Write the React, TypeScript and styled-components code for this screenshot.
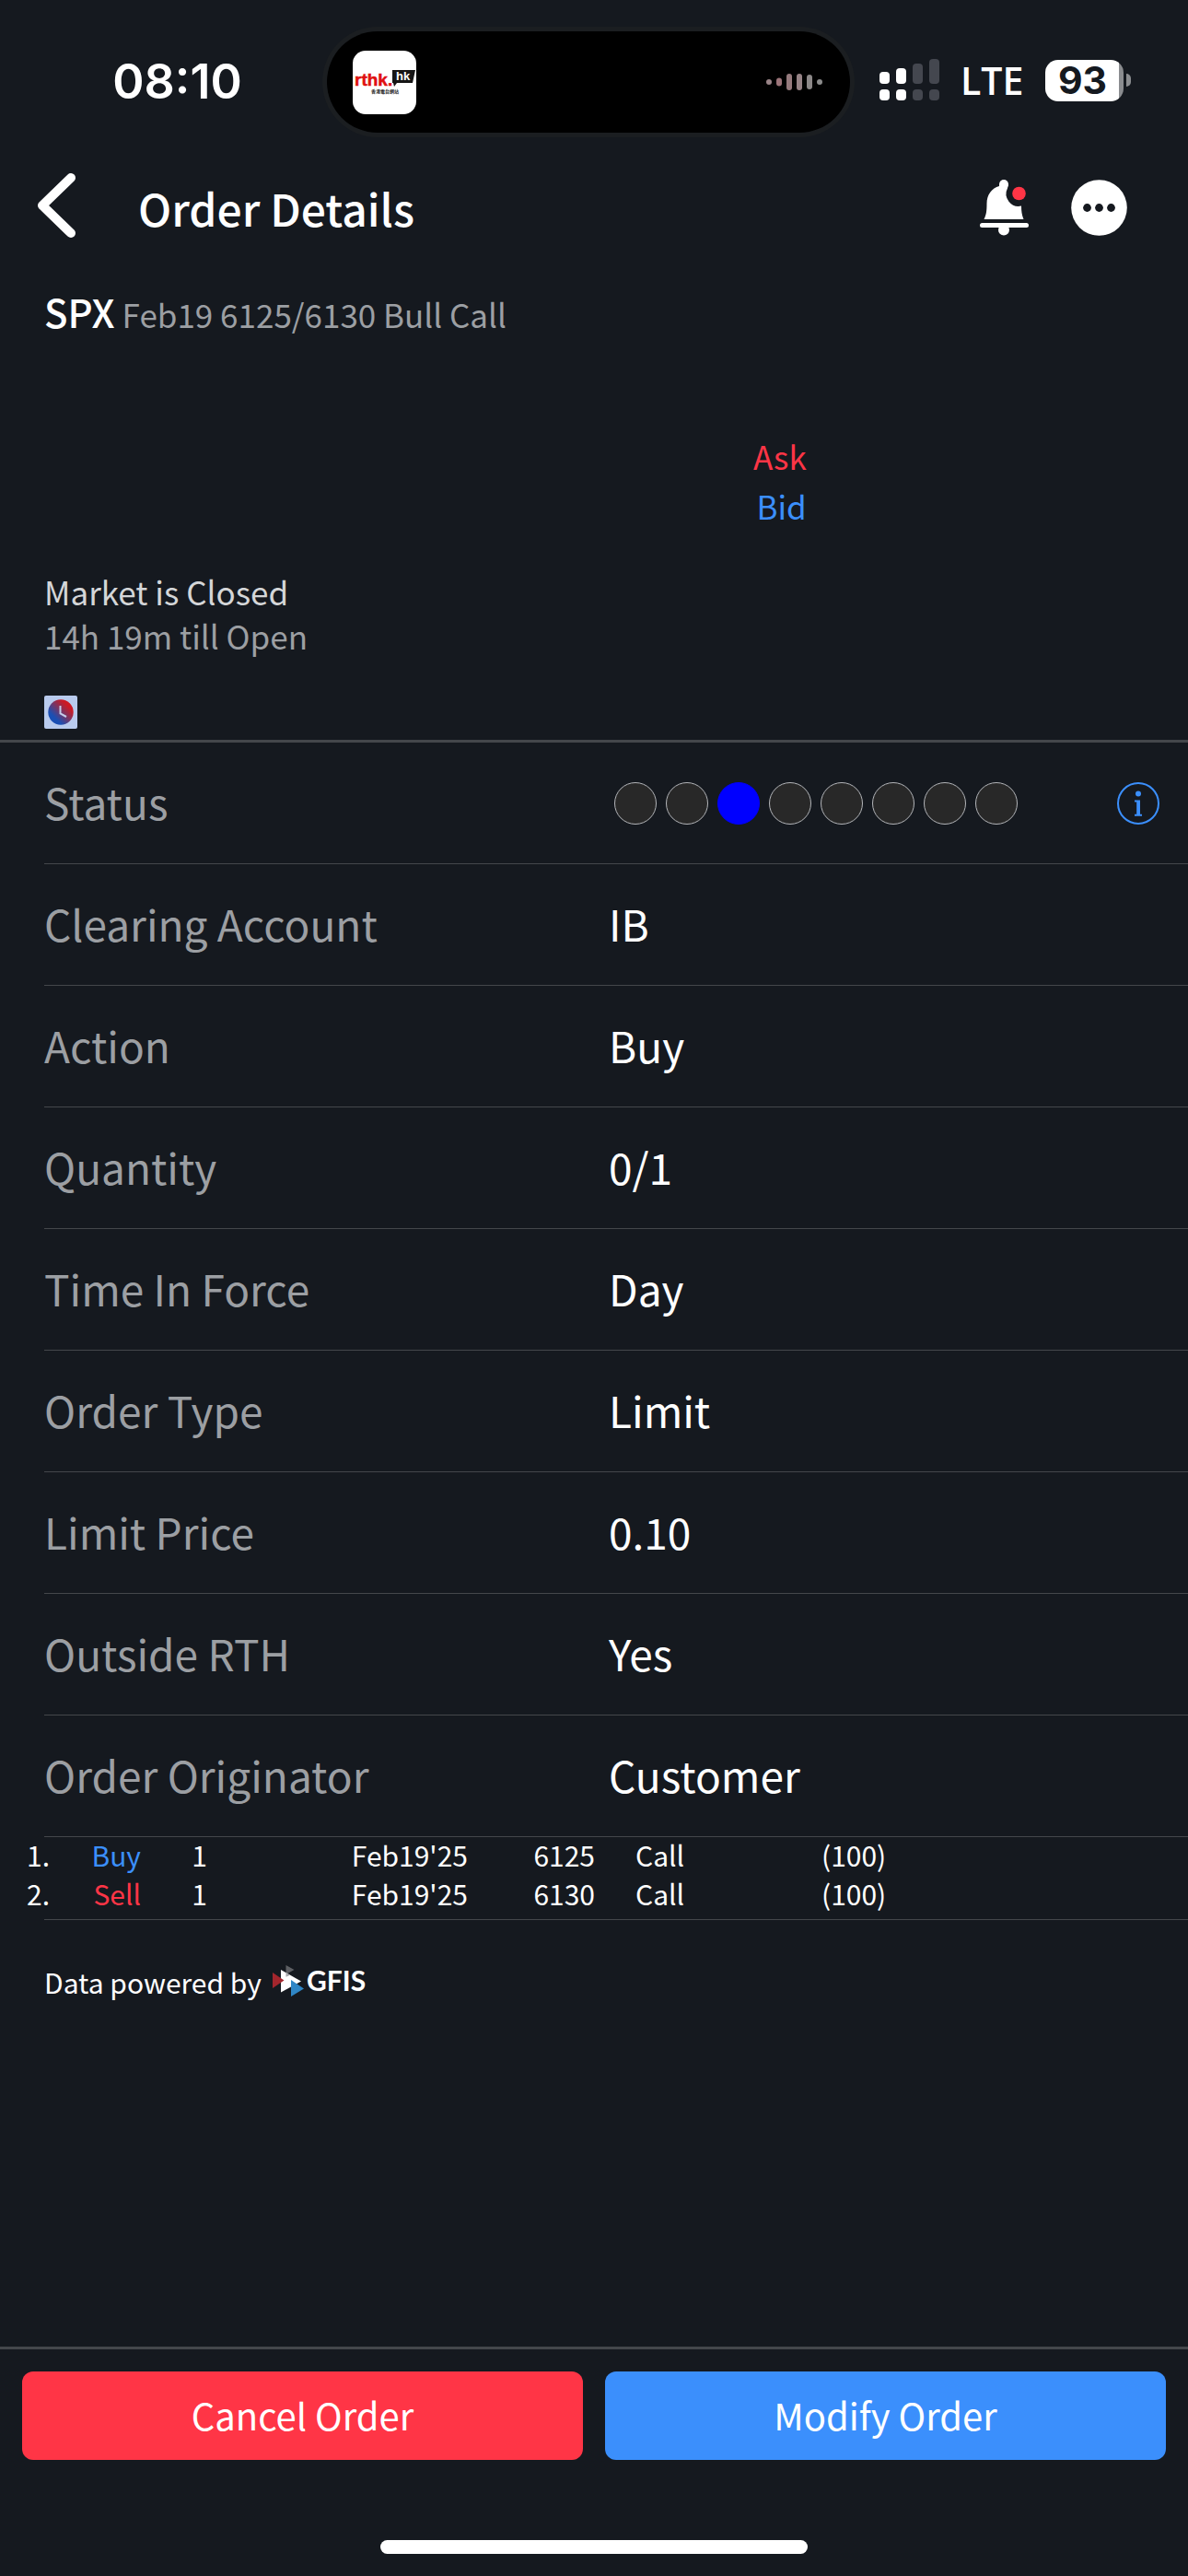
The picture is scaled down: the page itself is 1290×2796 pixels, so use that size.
import React from 'react';
import styled, { createGlobalStyle } from 'styled-components';

const color = {
  bg: '#15191f',
  line: '#44474b',
  label: '#9c9fa3',
  text: '#ffffff',
  soft: '#d4d6d8',
  red: '#ff3546',
  blue: '#3b8ffc',
};

const GlobalStyle = createGlobalStyle`
  * { box-sizing: border-box; }
  body {
    margin: 0;
    background: ${color.bg};
    color: ${color.text};
    font-family: "Noto Sans CJK SC", "Noto Sans", sans-serif;
  }
  button { font: inherit; color: inherit; border: 0; padding: 0; background: none; cursor: pointer; }
  svg { display: block; }
`;

const Page = styled.div`
  min-height: 100vh;
  display: flex;
  flex-direction: column;
`;

const StatusBar = styled.div`
  display: grid;
  grid-template-columns: 355fr 568fr 367fr;
  align-items: center;
  padding-top: 34px;
  font-family: Inter, "Liberation Sans", sans-serif;
`;

const Clock = styled.time`
  padding-left: 30px;
  text-align: center;
  font-size: 52px;
  line-height: 60px;
  font-weight: 600;
`;

const Island = styled.div`
  display: flex;
  align-items: center;
  justify-content: space-between;
  height: 110px;
  padding: 0 28px;
  border-radius: 55px;
  background: #000;
  box-shadow: 0 0 0 5px #1b1e21;
`;

const Indicators = styled.div`
  display: flex;
  align-items: center;
  padding: 0 0 4px 32px;
`;

const Network = styled.span`
  margin-left: 22px;
  width: 92px;
  font-family: "Open Sans", "Noto Sans", sans-serif;
  font-size: 41px;
  line-height: 48px;
  font-weight: 600;
`;

const Battery = styled.div`
  display: flex;
  align-items: center;
  gap: 3px;
`;

const BatteryBody = styled.span`
  width: 85px;
  padding-right: 4px;
  border-radius: 14px;
  background: linear-gradient(90deg, #fff 94%, #8a8c8f 94%);
  color: ${color.bg};
  text-align: center;
  font-size: 41px;
  line-height: 45px;
  font-weight: 700;
`;

const BatteryNub = styled.span`
  width: 5px;
  height: 14px;
  border-radius: 0 6px 6px 0;
  background: #8a8c8f;
`;

const AppBar = styled.header`
  display: flex;
  align-items: center;
  height: 162px;
  padding: 0 66px 0 40px;
`;

const Title = styled.h1`
  flex: 1;
  margin: 0 0 0 64px;
  font-size: 48px;
  line-height: 64px;
  font-weight: 500;
`;

const Actions = styled.div`
  display: flex;
  gap: 46px;
`;

const Summary = styled.section`
  padding: 1px 48px 12px;
  border-bottom: 3px solid ${color.line};
  font-size: 35px;
  line-height: 48px;
`;

const Contract = styled.div`
  display: flex;
  align-items: baseline;
  gap: 8px;
  line-height: 62px;
`;

const Symbol = styled.strong`
  font-size: 42px;
  font-weight: 500;
`;

const Muted = styled.span`
  color: ${color.label};
`;

const Quote = styled.div`
  display: grid;
  margin: 96px 30% 42px 0;
  padding-right: 8px;
  text-align: right;
  line-height: 54px;
`;

const Side = styled.span<{ $side: 'buy' | 'sell' }>`
  color: ${(p) => (p.$side === 'buy' ? color.blue : color.red)};
`;

const Session = styled.div`
  display: grid;
  margin-bottom: 41px;
  color: ${color.soft};
`;

const Fields = styled.dl`
  margin: 0;
  padding-left: 48px;
  font-size: 46px;
  line-height: 64px;
`;

const Field = styled.div`
  display: flex;
  align-items: center;
  height: 132px;
  border-bottom: 1px solid ${color.line};
`;

const Label = styled.dt`
  width: calc(50% - 8px);
  padding-bottom: 4px;
  color: ${color.label};
`;

const Value = styled.dd`
  margin: 0;
  padding-bottom: 4px;
`;

const StatusValue = styled.dd`
  flex: 1;
  display: flex;
  align-items: center;
  justify-content: space-between;
  margin: 0;
  padding: 0 31px 0 6px;
`;

const Steps = styled.div`
  display: flex;
  gap: 10px;
`;

const Step = styled.span<{ $active: boolean }>`
  width: 46px;
  height: 46px;
  border-radius: 50%;
  border: 1px solid ${(p) => (p.$active ? '#0000ff' : '#b4b6ba')};
  background: ${(p) => (p.$active ? '#0000ff' : '#282828')};
`;

const Legs = styled.table`
  width: 100%;
  table-layout: fixed;
  border-collapse: collapse;
  font-size: 30px;
  line-height: 38px;

  td { padding: 0 0 4px; }
`;

const Cell = styled.td<{ $end?: boolean }>`
  text-align: ${(p) => (p.$end ? 'right' : 'left')};
`;

const LegsEnd = styled.hr`
  width: calc(100% - 48px);
  margin: 5px 0 0 48px;
  border: 0;
  border-top: 1px solid ${color.line};
`;

const Powered = styled.div`
  display: flex;
  align-items: center;
  gap: 12px;
  padding: 42px 48px;
  font-size: 30px;
  line-height: 50px;
`;

const Footer = styled.footer`
  margin-top: auto;
  border-top: 3px solid ${color.line};
`;

const Buttons = styled.div`
  display: grid;
  grid-template-columns: 1fr 1fr;
  gap: 24px;
  padding: 24px 24px 87px;
`;

const ActionButton = styled.button<{ $tone: 'cancel' | 'modify' }>`
  && {
    height: 96px;
    padding-bottom: 2px;
    border-radius: 12px;
    background: ${(p) => (p.$tone === 'cancel' ? color.red : color.blue)};
    font-size: 40px;
    line-height: 60px;
  }
`;

const HomeIndicator = styled.div`
  width: 36%;
  height: 15px;
  margin: 0 auto 24px;
  border-radius: 8px;
  background: #fff;
`;

const RadioAppIcon = () => (
  <svg width="69" height="69" viewBox="0 0 69 69" aria-label="rthk.hk">
    <rect width="69" height="69" rx="14" fill="#fff" />
    <text x="2" y="38" fontFamily="'Liberation Sans', sans-serif" fontWeight="700" fontSize="19" fill="#e01010" stroke="#e01010" strokeWidth="0.500">rthk.</text>
    <path d="M43 21h25l-3 14H48l-3 4-1-4h-1z" fill="#151515" />
    <text x="47" y="32" fontFamily="'Liberation Sans', sans-serif" fontWeight="700" fontSize="13" fill="#fff">hk</text>
    <text x="35" y="46" textAnchor="middle" fontWeight="700" fontSize="5" fontFamily="'Noto Sans CJK TC', sans-serif" fill="#222">香港電台網站</text>
  </svg>
);

const waveBars = [
  { h: 6, fill: '#9a8488' },
  { h: 9, fill: '#9c7479' },
  { h: 18, fill: '#957a7d' },
  { h: 18, fill: '#968386' },
  { h: 16, fill: '#8c8888' },
  { h: 6, fill: '#8b8b8b' },
];

const Waveform = () => (
  <svg width="63" height="24" viewBox="0 0 63 24" aria-hidden="true">
    {waveBars.map((b, i) => (
      <rect key={i} x={i * 11} y={12 - b.h / 2} width="6" height={b.h} rx="3" fill={b.fill} />
    ))}
  </svg>
);

const SignalBars = () => (
  <svg width="66" height="46" viewBox="0 0 66 46" aria-label="Signal">
    {[14, 10, 5, 0].map((top, i) => (
      <g key={top} fill={i < 2 ? '#fff' : '#44474f'}>
        <rect x={i * 18} y={top} width="11" height={27 - top} rx="4" />
        <rect x={i * 18} y="33" width="11" height="12" rx="4" />
      </g>
    ))}
  </svg>
);

const BackIcon = () => (
  <svg width="46" height="76" viewBox="0 0 46 76" aria-hidden="true">
    <path d="M37 6 6 36l31 30" fill="none" stroke="#fff" strokeWidth="10" strokeLinecap="round" strokeLinejoin="round" />
  </svg>
);

const BellIcon = () => (
  <svg width="53" height="61" viewBox="0 0 53 61" aria-hidden="true">
    <g fill="#fff">
      <circle cx="26" cy="5" r="5" />
      <path d="M21 7C13 9.500 7.500 16 7.500 26 7.500 34 7 38 4.500 43H47.500C45.500 38 45 34 45 28.500A13.500 13.500 0 0 1 30 9.300L31 5H21z" />
      <rect x="0" y="47" width="53" height="5" rx="2.500" />
      <circle cx="26" cy="54.500" r="6" />
    </g>
    <circle cx="42.500" cy="15" r="7.300" fill={color.red} />
  </svg>
);

const MoreIcon = () => (
  <svg width="61" height="61" viewBox="0 0 61 61" aria-hidden="true">
    <circle cx="30.500" cy="30.500" r="30.300" fill="#fff" />
    <g fill={color.bg}>
      <circle cx="17.500" cy="30.500" r="4.400" />
      <circle cx="30.500" cy="30.500" r="4.400" />
      <circle cx="43.500" cy="30.500" r="4.400" />
    </g>
  </svg>
);

const ClockIcon = () => (
  <svg width="36" height="36" viewBox="0 0 36 36" aria-label="Trading hours">
    <defs>
      <linearGradient id="clockFill" x1="0.200" y1="0.850" x2="0.850" y2="0.200">
        <stop offset="0.150" stopColor="#1a4fb4" />
        <stop offset="0.550" stopColor="#7a3562" />
        <stop offset="0.900" stopColor="#cb1a25" />
      </linearGradient>
    </defs>
    <rect width="36" height="36" rx="2" fill="#b9cbee" />
    <circle cx="18" cy="18" r="13.700" fill="url(#clockFill)" />
    <path d="M17.500 11v8.500l6.500 3.500" fill="none" stroke="#c6cdea" strokeWidth="2" />
  </svg>
);

const InfoIcon = () => (
  <svg width="46" height="46" viewBox="0 0 46 46" aria-hidden="true">
    <circle cx="23" cy="23" r="22" fill="none" stroke={color.blue} strokeWidth="2" />
    <g fill={color.blue}>
      <circle cx="23" cy="12.500" r="3" />
      <path d="M19 19.500h6v15.200h2V36.700h-8V34.700h2.200V21.500H19z" />
    </g>
  </svg>
);

const GfisLogo = () => (
  <svg width="120" height="40" viewBox="0 0 120 40" aria-label="GFIS">
    <path d="M14.500 2l9 5-9 5z" fill="#5e6064" />
    <path d="M9 7l22 12.500L9 31.500z" fill="#fff" />
    <path d="M14.500 10l4.500 2.700-4.500 2z" fill="#a4a6aa" />
    <path d="M0 10l12.500 8.500L0 27z" fill="#a3262d" />
    <path d="M20 18l14 9.500-14 8.500z" fill="#2f86c6" />
    <text x="37" y="30" fontFamily="Lato, sans-serif" fontWeight="700" fontSize="30" fill="#fff">GFIS</text>
  </svg>
);

const fields = [
  ['Clearing Account', 'IB'],
  ['Action', 'Buy'],
  ['Quantity', '0/1'],
  ['Time In Force', 'Day'],
  ['Order Type', 'Limit'],
  ['Limit Price', '0.10'],
  ['Outside RTH', 'Yes'],
  ['Order Originator', 'Customer'],
];

const legs = [
  { side: 'buy' as const, name: 'Buy', strike: '6125' },
  { side: 'sell' as const, name: 'Sell', strike: '6130' },
];

const legColumns = ['54px', '99px', '72px', '283px', '138px', '44px', '202px', 'auto'];

export default function App() {
  return (
    <Page>
      <GlobalStyle />
      <StatusBar>
        <Clock>08:10</Clock>
        <Island>
          <RadioAppIcon />
          <Waveform />
        </Island>
        <Indicators>
          <SignalBars />
          <Network>LTE</Network>
          <Battery>
            <BatteryBody>93</BatteryBody>
            <BatteryNub />
          </Battery>
        </Indicators>
      </StatusBar>

      <AppBar>
        <button type="button" aria-label="Back"><BackIcon /></button>
        <Title>Order Details</Title>
        <Actions>
          <button type="button" aria-label="Notifications"><BellIcon /></button>
          <button type="button" aria-label="More"><MoreIcon /></button>
        </Actions>
      </AppBar>

      <main>
        <Summary>
          <Contract>
            <Symbol>SPX</Symbol>
            <Muted>Feb19 6125/6130 Bull Call</Muted>
          </Contract>
          <Quote>
            <Side $side="sell">Ask</Side>
            <Side $side="buy">Bid</Side>
          </Quote>
          <Session>
            <span>Market is Closed</span>
            <Muted>14h 19m till Open</Muted>
          </Session>
          <ClockIcon />
        </Summary>

        <Fields>
          <Field>
            <Label>Status</Label>
            <StatusValue>
              <Steps role="img" aria-label="Step 3 of 8">
                {Array.from({ length: 8 }, (_, i) => (
                  <Step key={i} $active={i === 2} />
                ))}
              </Steps>
              <button type="button" aria-label="Status information"><InfoIcon /></button>
            </StatusValue>
          </Field>
          {fields.map(([label, value]) => (
            <Field key={label}>
              <Label>{label}</Label>
              <Value>{value}</Value>
            </Field>
          ))}
        </Fields>

        <Legs>
          <colgroup>
            {legColumns.map((width, i) => (
              <col key={i} style={{ width }} />
            ))}
          </colgroup>
          <tbody>
            {legs.map((leg, i) => (
              <tr key={leg.name}>
                <Cell $end>{i + 1}.</Cell>
                <Cell $end><Side $side={leg.side}>{leg.name}</Side></Cell>
                <Cell $end>1</Cell>
                <Cell $end>Feb19'25</Cell>
                <Cell $end>{leg.strike}</Cell>
                <Cell />
                <Cell>Call</Cell>
                <Cell>(100)</Cell>
              </tr>
            ))}
          </tbody>
        </Legs>
        <LegsEnd />

        <Powered>
          <span>Data powered by</span>
          <GfisLogo />
        </Powered>
      </main>

      <Footer>
        <Buttons>
          <ActionButton type="button" $tone="cancel">Cancel Order</ActionButton>
          <ActionButton type="button" $tone="modify">Modify Order</ActionButton>
        </Buttons>
        <HomeIndicator />
      </Footer>
    </Page>
  );
}
